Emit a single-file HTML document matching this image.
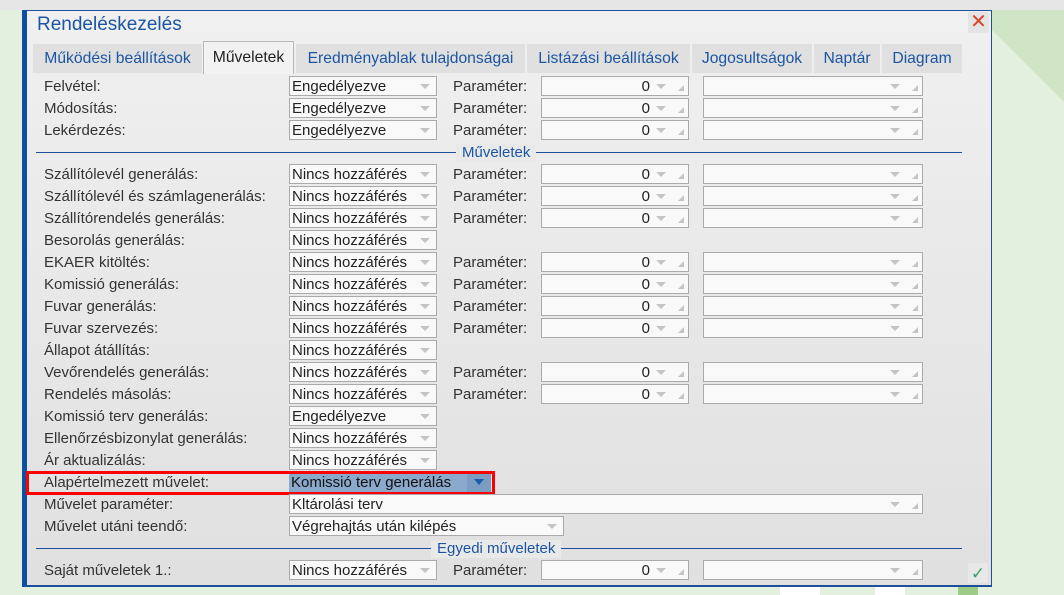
<!DOCTYPE html>
<html><head><meta charset="utf-8"><style>
*{box-sizing:border-box;margin:0;padding:0}
body{width:1064px;height:595px;overflow:hidden;background:#e4f0df;font-family:"Liberation Sans",sans-serif;position:relative}
.top{position:absolute;left:0;top:0;width:1064px;height:10px;background:#e6e6e6}
.g1{position:absolute;left:992px;top:10px;width:80px;height:100px;background:#cfe5c5;clip-path:polygon(0 0,100% 0,100% 100%,0 20%)}
.dlg{position:absolute;left:22px;top:10px;width:970px;height:577px;border:1px solid #1d4f9c;border-left:5px solid #0b4ea2;border-bottom:2px solid #1d4f9c;background:linear-gradient(#f0f0f0,#e0e0e0)}
.title{position:absolute;left:37px;top:14px;font-size:19px;color:#1b55a3}
.x{position:absolute;left:968px;top:12px;width:21px;height:21px;background:#e4e4e4;color:#d9452b;font-size:20px;text-align:center;line-height:21px}
.ok{position:absolute;left:968px;top:563px;width:20px;height:20px;background:#e8e8e8;color:#3aa06a;font-size:17px;text-align:center;line-height:22px}
.tab{position:absolute;top:44px;height:29px;background:#e0e0e0;color:#1b55a3;font-size:15.7px;line-height:29px;text-align:center;white-space:nowrap}
.tab.a{background:#f2f2f2;border:1px solid #b8b8b8;border-bottom:none;top:41px;height:33px;color:#222;line-height:31px}
.r{position:absolute;left:0;width:1064px;height:20px;font-size:15px;color:#333}
.r>*{position:absolute;top:0;height:20px;line-height:21px}
.l{left:44px}
.p{left:453px}
.cb{background:#f9f9f9;border:1px solid #aaa;padding-left:2px;color:#222;white-space:nowrap;overflow:hidden;line-height:19px!important}
.cb::after{content:"";position:absolute;right:6px;top:7px;border-left:5px solid transparent;border-right:5px solid transparent;border-top:5px solid #c4c4c4}
.c1{left:289px;width:148px}
.c2{left:541px;width:148px;text-align:right;padding-right:38px}
.c3{left:703px;width:220px}
.c2::after{right:22px}
.c3::after{right:22px}
.c2::before,.c3::before{content:"";position:absolute;right:4px;bottom:4px;border-left:6px solid transparent;border-bottom:6px solid #c4c4c4}
.sep{position:absolute;left:36px;width:926px;height:1px;background:#1d4f9c}
.sept{position:absolute;font-size:15px;color:#1b55a3;background:#e9e9e9;padding:0 6px;line-height:18px}
</style></head><body>
<div class="top"></div>
<div class="g1"></div>
<div style="position:absolute;left:780px;top:587px;width:40px;height:8px;background:#fff"></div>
<div style="position:absolute;left:875px;top:587px;width:30px;height:8px;background:#fff"></div>
<div style="position:absolute;left:958px;top:587px;width:20px;height:8px;background:#9ccc85"></div>
<div class="dlg"></div>
<div class="title">Rendeléskezelés</div>
<div class="x">✕</div>
<div class="tab" style="left:33px;width:169px">Működési beállítások</div>
<div class="tab a" style="left:203px;width:91px">Műveletek</div>
<div class="tab" style="left:296px;width:229px">Eredményablak tulajdonságai</div>
<div class="tab" style="left:527px;width:163px">Listázási beállítások</div>
<div class="tab" style="left:692px;width:120px">Jogosultságok</div>
<div class="tab" style="left:814px;width:66px">Naptár</div>
<div class="tab" style="left:882px;width:80px">Diagram</div>

<div class="r" style="top:76px"><span class="l">Felvétel:</span><span class="cb c1">Engedélyezve</span><span class="p">Paraméter:</span><span class="cb c2">0</span><span class="cb c3"></span></div>
<div class="r" style="top:98px"><span class="l">Módosítás:</span><span class="cb c1">Engedélyezve</span><span class="p">Paraméter:</span><span class="cb c2">0</span><span class="cb c3"></span></div>
<div class="r" style="top:120px"><span class="l">Lekérdezés:</span><span class="cb c1">Engedélyezve</span><span class="p">Paraméter:</span><span class="cb c2">0</span><span class="cb c3"></span></div>

<div class="sep" style="top:152px"></div><div class="sept" style="left:456px;top:144px">Műveletek</div>

<div class="r" style="top:164px"><span class="l">Szállítólevél generálás:</span><span class="cb c1">Nincs hozzáférés</span><span class="p">Paraméter:</span><span class="cb c2">0</span><span class="cb c3"></span></div>
<div class="r" style="top:186px"><span class="l">Szállítólevél és számlagenerálás:</span><span class="cb c1">Nincs hozzáférés</span><span class="p">Paraméter:</span><span class="cb c2">0</span><span class="cb c3"></span></div>
<div class="r" style="top:208px"><span class="l">Szállítórendelés generálás:</span><span class="cb c1">Nincs hozzáférés</span><span class="p">Paraméter:</span><span class="cb c2">0</span><span class="cb c3"></span></div>
<div class="r" style="top:230px"><span class="l">Besorolás generálás:</span><span class="cb c1">Nincs hozzáférés</span></div>
<div class="r" style="top:252px"><span class="l">EKAER kitöltés:</span><span class="cb c1">Nincs hozzáférés</span><span class="p">Paraméter:</span><span class="cb c2">0</span><span class="cb c3"></span></div>
<div class="r" style="top:274px"><span class="l">Komissió generálás:</span><span class="cb c1">Nincs hozzáférés</span><span class="p">Paraméter:</span><span class="cb c2">0</span><span class="cb c3"></span></div>
<div class="r" style="top:296px"><span class="l">Fuvar generálás:</span><span class="cb c1">Nincs hozzáférés</span><span class="p">Paraméter:</span><span class="cb c2">0</span><span class="cb c3"></span></div>
<div class="r" style="top:318px"><span class="l">Fuvar szervezés:</span><span class="cb c1">Nincs hozzáférés</span><span class="p">Paraméter:</span><span class="cb c2">0</span><span class="cb c3"></span></div>
<div class="r" style="top:340px"><span class="l">Állapot átállítás:</span><span class="cb c1">Nincs hozzáférés</span></div>
<div class="r" style="top:362px"><span class="l">Vevőrendelés generálás:</span><span class="cb c1">Nincs hozzáférés</span><span class="p">Paraméter:</span><span class="cb c2">0</span><span class="cb c3"></span></div>
<div class="r" style="top:384px"><span class="l">Rendelés másolás:</span><span class="cb c1">Nincs hozzáférés</span><span class="p">Paraméter:</span><span class="cb c2">0</span><span class="cb c3"></span></div>
<div class="r" style="top:406px"><span class="l">Komissió terv generálás:</span><span class="cb c1">Engedélyezve</span></div>
<div class="r" style="top:428px"><span class="l">Ellenőrzésbizonylat generálás:</span><span class="cb c1">Nincs hozzáférés</span></div>
<div class="r" style="top:450px"><span class="l">Ár aktualizálás:</span><span class="cb c1">Nincs hozzáférés</span></div>
<div class="r" style="top:472px"><span class="l">Alapértelmezett művelet:</span><span style="left:289px;width:202px;background:#8ba9cb;color:#111;padding-left:2px">Komissió terv generálás<i style="position:absolute;right:0;top:0;width:24px;height:20px;background:#7c9cc2"></i><b style="position:absolute;right:7px;top:7px;border-left:5px solid transparent;border-right:5px solid transparent;border-top:6px solid #1d5aa8"></b></span></div>
<div style="position:absolute;left:26px;top:471px;width:469px;height:24px;border:3px solid #f00"></div>
<div class="r" style="top:494px"><span class="l">Művelet paraméter:</span><span class="cb c3" style="left:289px;width:634px">Kltárolási terv</span></div>
<div class="r" style="top:516px"><span class="l">Művelet utáni teendő:</span><span class="cb c1" style="width:275px">Végrehajtás után kilépés</span></div>

<div class="sep" style="top:548px"></div><div class="sept" style="left:431px;top:540px">Egyedi műveletek</div>

<div class="r" style="top:560px"><span class="l">Saját műveletek 1.:</span><span class="cb c1">Nincs hozzáférés</span><span class="p">Paraméter:</span><span class="cb c2">0</span><span class="cb c3"></span></div>
<div class="ok">✓</div>
</body></html>
